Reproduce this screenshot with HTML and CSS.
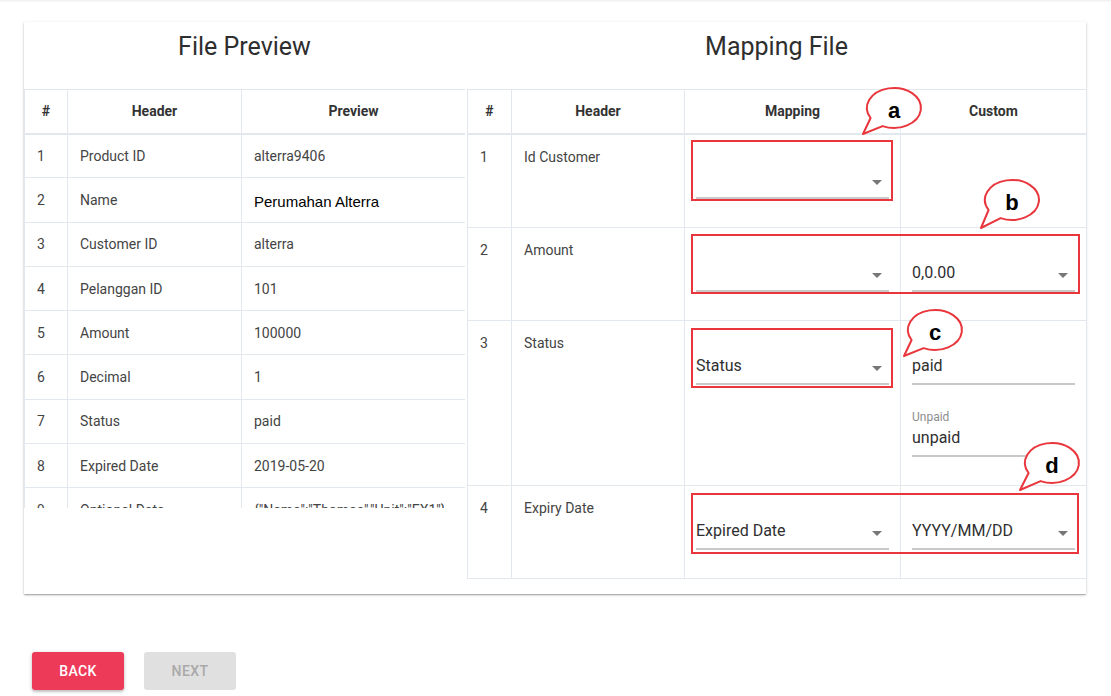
FILE: index.html
```html
<!DOCTYPE html>
<html lang="en">
<head>
<meta charset="utf-8">
<title>Mapping File</title>
<link rel="stylesheet" href="styles.css">
</head>
<body>
<div class="page">
  <div class="topline"></div>
  <div class="card">
    <section class="panel panel-left">
      <h2 class="panel-title">File Preview</h2>
      <div class="scroll">
        <table class="grid grid-left">
          <colgroup><col class="c-num-l"><col class="c-head-l"><col class="c-prev"></colgroup>
          <thead>
            <tr><th>#</th><th>Header</th><th>Preview</th></tr>
          </thead>
          <tbody>
            <tr><td>1</td><td>Product ID</td><td>alterra9406</td></tr>
            <tr><td>2</td><td>Name</td><td><span class="pasted">Perumahan Alterra</span></td></tr>
            <tr><td>3</td><td>Customer ID</td><td>alterra</td></tr>
            <tr><td>4</td><td>Pelanggan ID</td><td>101</td></tr>
            <tr><td>5</td><td>Amount</td><td>100000</td></tr>
            <tr><td>6</td><td>Decimal</td><td>1</td></tr>
            <tr><td>7</td><td>Status</td><td>paid</td></tr>
            <tr><td>8</td><td>Expired Date</td><td>2019-05-20</td></tr>
            <tr><td>9</td><td>Optional Data</td><td>{"Name":"Thomas","Unit":"EX1"}</td></tr>
          </tbody>
        </table>
      </div>
    </section>
    <section class="panel panel-right">
      <h2 class="panel-title">Mapping File</h2>
      <table class="grid grid-right">
        <colgroup><col class="c-num-r"><col class="c-head-r"><col class="c-map"><col class="c-custom"></colgroup>
        <thead>
          <tr><th>#</th><th>Header</th><th>Mapping</th><th>Custom</th></tr>
        </thead>
        <tbody>
          <tr>
            <td>1</td><td>Id Customer</td>
            <td><div class="field"><div class="field-input select"><span class="value"></span><svg class="arrow" viewBox="0 0 24 24"><path d="M7 10l5 5 5-5z"/></svg></div></div></td>
            <td></td>
          </tr>
          <tr>
            <td>2</td><td>Amount</td>
            <td><div class="field"><div class="field-input select"><span class="value"></span><svg class="arrow" viewBox="0 0 24 24"><path d="M7 10l5 5 5-5z"/></svg></div></div></td>
            <td><div class="field"><div class="field-input select"><span class="value">0,0.00</span><svg class="arrow" viewBox="0 0 24 24"><path d="M7 10l5 5 5-5z"/></svg></div></div></td>
          </tr>
          <tr>
            <td>3</td><td>Status</td>
            <td><div class="field"><div class="field-input select"><span class="value">Status</span><svg class="arrow" viewBox="0 0 24 24"><path d="M7 10l5 5 5-5z"/></svg></div></div></td>
            <td>
              <div class="field"><div class="field-input"><span class="value">paid</span></div></div>
              <div class="field labeled"><span class="field-label">Unpaid</span><div class="field-input"><span class="value">unpaid</span></div></div>
            </td>
          </tr>
          <tr>
            <td>4</td><td>Expiry Date</td>
            <td><div class="field"><div class="field-input select"><span class="value">Expired Date</span><svg class="arrow" viewBox="0 0 24 24"><path d="M7 10l5 5 5-5z"/></svg></div></div></td>
            <td><div class="field"><div class="field-input select"><span class="value">YYYY/MM/DD</span><svg class="arrow" viewBox="0 0 24 24"><path d="M7 10l5 5 5-5z"/></svg></div></div></td>
          </tr>
        </tbody>
      </table>
    </section>
  </div>
  <div class="actions">
    <button class="btn btn-back">Back</button>
    <button class="btn btn-next" disabled>Next</button>
  </div>

  <svg class="annotations" viewBox="0 0 1111 696" width="1111" height="696">
    <g class="marks">
      <rect x="692" y="141" width="200" height="59"/>
      <rect x="692" y="235" width="387" height="58"/>
      <rect x="692" y="329" width="200" height="58"/>
      <rect x="692" y="494" width="386" height="59"/>
    </g>
    <g class="bubble">
      <path d="M882.6 126.1 A27 20 0 1 0 870.6 118 L863 134 Z"/>
      <text x="894" y="118">a</text>
    </g>
    <g class="bubble">
      <path d="M1000.6 218.1 A27 20 0 1 0 988.6 210 L981 228 Z"/>
      <text x="1012" y="210">b</text>
    </g>
    <g class="bubble">
      <path d="M923.6 348.1 A27 20 0 1 0 911.6 340 L904 356 Z"/>
      <text x="935" y="340">c</text>
    </g>
    <g class="bubble">
      <path d="M1040.6 481.1 A27 20 0 1 0 1028.6 473 L1020 490 Z"/>
      <text x="1052" y="473">d</text>
    </g>
  </svg>
</div>
</body>
</html>
```

FILE: styles.css
```css
* { box-sizing: border-box; }

body {
  margin: 0;
  background: #ffffff;
  font-family: Roboto, "Liberation Sans", Arial, sans-serif;
  color: #333333;
}

.page {
  position: relative;
  width: 1111px;
  height: 696px;
  overflow: hidden;
}

.topline {
  height: 1px;
  background: #f1f1f1;
  box-shadow: 0 1px 2px rgba(0, 0, 0, 0.05);
}

.card {
  display: flex;
  gap: 2px;
  margin: 21px 25px 0 24px;
  padding-bottom: 15px;
  background: #ffffff;
  box-shadow: 0 1px 3px 0 rgba(0, 0, 0, 0.2), 0 1px 1px 0 rgba(0, 0, 0, 0.12), 0 2px 1px -1px rgba(0, 0, 0, 0.1);
}

.panel-left { width: 441px; flex: none; }
.panel-right { flex: 1; min-width: 0; }

.panel-title {
  margin: 0;
  height: 67px;
  padding-top: 9px;
  font-size: 25px;
  font-weight: 400;
  line-height: 32px;
  text-align: center;
  color: #2e2e2e;
}

.scroll {
  height: 419px;
  overflow: hidden;
}

.grid {
  width: 100%;
  border-collapse: collapse;
  table-layout: fixed;
  font-size: 14px;
}

.grid th,
.grid td {
  border: 1px solid #e3e7ee;
}

.grid th {
  height: 44px;
  padding: 0;
  font-weight: 700;
  color: #333333;
  text-align: center;
  border-bottom-width: 2px;
}

.c-num-l { width: 43px; }
.c-head-l { width: 174px; }
.c-prev { width: 224px; }

.c-num-r { width: 44px; }
.c-head-r { width: 173px; }
.c-map { width: 216px; }
.c-custom { width: 186px; }

.grid-left td {
  height: 44.3px;
  padding: 0 12px;
  color: #444444;
  white-space: nowrap;
  overflow: hidden;
  vertical-align: middle;
}

.pasted {
  display: inline-block;
  padding-top: 4px;
  font-family: "Liberation Sans", Arial, sans-serif;
  font-size: 15px;
  color: #000000;
}

.grid-right td {
  padding: 14px 11px 28px 11px;
  line-height: 16px;
  color: #444444;
  vertical-align: top;
}

.grid-right td:first-child,
.grid-right td:nth-child(2) {
  padding-left: 12px;
}

.field {
  padding-top: 18px;
}

.field.labeled {
  padding-top: 0;
  margin-top: 24px;
}

.field-label {
  display: block;
  height: 16px;
  font-size: 12px;
  line-height: 16px;
  color: #8d8d8d;
}

.field-input {
  position: relative;
  height: 32px;
  padding-right: 24px;
  font-size: 16px;
  line-height: 26px;
  color: #2f2f2f;
  border-bottom: 2px solid #c9c9c9;
  white-space: nowrap;
}

.arrow {
  position: absolute;
  right: 0;
  top: 3px;
  width: 24px;
  height: 24px;
  fill: #777777;
}

.actions {
  display: flex;
  gap: 20px;
  margin: 58px 0 0 32px;
}

.btn {
  width: 92px;
  height: 38px;
  border: 0;
  border-radius: 3px;
  font-family: Roboto, "Liberation Sans", sans-serif;
  font-size: 14px;
  font-weight: 500;
  letter-spacing: 0.4px;
  text-transform: uppercase;
}

.btn-back {
  background: #ee3a59;
  color: #ffffff;
  box-shadow: 0 1px 4px rgba(0, 0, 0, 0.2), 0 2px 2px rgba(0, 0, 0, 0.12);
}

.btn-next {
  background: #e0e0e0;
  color: #a9a9a9;
}

.annotations {
  position: absolute;
  left: 0;
  top: 0;
  pointer-events: none;
}

.marks rect {
  fill: none;
  stroke: #e8363c;
  stroke-width: 2;
}

.bubble path {
  fill: #ffffff;
  stroke: #e8363c;
  stroke-width: 2;
  stroke-linejoin: round;
}

.bubble text {
  font-family: "Liberation Sans", Arial, sans-serif;
  font-size: 22px;
  font-weight: 700;
  fill: #000000;
  text-anchor: middle;
}
```
